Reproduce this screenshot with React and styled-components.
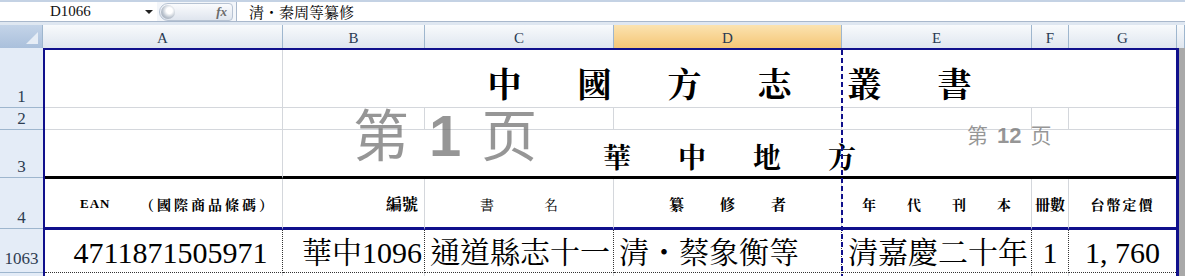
import React from 'react';
import styled, { createGlobalStyle } from 'styled-components';

const NAVY = '#10108c';
const GRID = '#d4d7dc';
const HEAD_LINE = '#9eb6ce';
const LATIN_SERIF = `"Liberation Serif", "Times New Roman", "DejaVu Serif"`;
const SERIF = `${LATIN_SERIF}, "Noto Serif CJK TC", "Noto Sans CJK TC", serif`;
const CJK = `"Noto Serif CJK TC", "Noto Sans CJK TC", serif`;

const GlobalStyle = createGlobalStyle`
  html, body {
    margin: 0;
    padding: 0;
    background: #fff;
    overflow: hidden;
  }
  body {
    font-family: ${SERIF};
    color: #000;
  }
`;

const Window = styled.div`
  width: 1185px;
  height: 276px;
  overflow: hidden;
`;

/* ---------- formula bar ---------- */
const FormulaBar = styled.div`
  height: 25px;
  box-sizing: border-box;
  display: flex;
  background: #dce6f2;
  border-top: 2px solid #c4d2e4;
  border-bottom: 3px solid #dfe7f1;
`;
const NameBox = styled.div`
  width: 157px;
  background: #fff;
  border-bottom: 1px solid #a9b8cc;
  display: flex;
  align-items: center;
  position: relative;
  font-family: ${LATIN_SERIF}, serif;
  font-size: 15px;
  color: #111;
  padding-left: 50px;
  box-sizing: border-box;
`;
const Arrow = styled.span`
  position: absolute;
  right: 4px;
  top: 8px;
  border-left: 4px solid transparent;
  border-right: 4px solid transparent;
  border-top: 4px solid #222;
`;
const FxArea = styled.div`
  width: 79px;
  display: flex;
  align-items: center;
  background: #f3f6fa;
  border-bottom: 1px solid #a9b8cc;
`;
const Pill = styled.div`
  width: 74px;
  height: 18px;
  margin-left: 2px;
  border-radius: 9px 4px 4px 9px;
  background: linear-gradient(#fafbfd, #dfe5ee);
  border: 1px solid #b7c3d3;
  box-sizing: border-box;
  display: flex;
  align-items: center;
  justify-content: space-between;
  padding: 0 5px 0 1px;
`;
const Knob = styled.span`
  width: 14px;
  height: 14px;
  border-radius: 50%;
  background: radial-gradient(circle at 60% 40%, #fff 0 25%, #b9c2cd 60%, #8f9aa8);
`;
const Fx = styled.span`
  font-family: ${LATIN_SERIF}, serif;
  font-style: italic;
  font-weight: 700;
  font-size: 13px;
  color: #6b6b6b;
`;
const FormulaInput = styled.div`
  flex: 1;
  background: #fff;
  border-left: 1px solid #a9b8cc;
  border-bottom: 1px solid #a9b8cc;
  padding-left: 12px;
  font-family: ${CJK};
  font-size: 15px;
  line-height: 19px;
`;

/* ---------- sheet frame ---------- */
const Sheet = styled.div`
  display: grid;
  grid-template-columns: 43px 1fr;
  grid-template-rows: 23px auto;
`;
const Corner = styled.div`
  background: linear-gradient(#c4d4e8, #aac0dc);
  border-right: 1px solid ${HEAD_LINE};
  position: relative;
  &::after {
    content: '';
    position: absolute;
    right: 4px;
    bottom: 4px;
    border-left: 12px solid transparent;
    border-bottom: 12px solid #e6edf6;
  }
`;
const ColHeaderBar = styled.div`
  display: flex;
`;
const ColHead = styled.div`
  flex: ${p => (p.$w ? `0 0 ${p.$w}px` : '1')};
  box-sizing: border-box;
  border-right: 1px solid ${HEAD_LINE};
  background: ${p =>
    p.$active
      ? 'linear-gradient(#fbe3b0, #f5c676)'
      : 'linear-gradient(#f8fafc, #dfe6ef)'};
  display: flex;
  align-items: center;
  justify-content: center;
  padding-top: 3px;
  font-family: ${LATIN_SERIF}, serif;
  font-size: 15px;
  color: #2a3a52;
`;
const RowHeaderBar = styled.div`
  display: flex;
  flex-direction: column;
`;
const RowHead = styled.div`
  height: ${p => p.$h}px;
  flex: none;
  box-sizing: border-box;
  background: #e4ecf7;
  border-bottom: 1px solid ${HEAD_LINE};
  display: flex;
  align-items: flex-end;
  justify-content: center;
  padding-bottom: ${p => p.$pb || 1}px;
  font-family: ${LATIN_SERIF}, serif;
  font-size: 17px;
  line-height: 18px;
  color: #2e3d52;
`;
const Body = styled.div`
  display: flex;
  align-items: flex-start;
`;
const Page = styled.div`
  position: relative;
  display: grid;
  grid-template-columns: 238px 142px 189px 228px 190px 37px 107px;
  grid-template-rows: 58px 22px 49px 51px 43px 30px;
  border-top: 2px solid ${NAVY};
  border-left: 2px solid ${NAVY};
  border-right: 3px solid ${NAVY};
`;
const Outside = styled.div`
  flex: 1;
  align-self: stretch;
  background: #a9a9a9;
`;

/* ---------- cells ---------- */
const Cell = styled.div`
  box-sizing: border-box;
  min-width: 0;
  overflow: hidden;
  grid-column: span ${p => p.$span || 1};
  border-right: ${p => (p.$last ? 'none' : `1px solid ${GRID}`)};
  border-bottom: 1px solid ${GRID};
  display: flex;
`;
const TitleCell = styled(Cell)`
  justify-content: center;
  align-items: flex-end;
  gap: ${p => p.$gap}px;
  padding-bottom: ${p => p.$pb}px;
  font-family: ${CJK};
  font-weight: 700;
  font-size: ${p => p.$size}px;
  line-height: 1;
  border-bottom: ${p => p.$rule || `1px solid ${GRID}`};
`;
const BlankCell = styled(Cell)`
  border-bottom: ${p => p.$rule || `1px solid ${GRID}`};
`;
const HeadCell = styled(Cell)`
  align-items: center;
  justify-content: ${p => p.$justify || 'center'};
  gap: ${p => p.$gap || 0}px;
  padding: 1px ${p => p.$pr || 0}px 0 ${p => p.$pl || 0}px;
  font-family: ${CJK};
  font-weight: ${p => (p.$light ? 400 : 700)};
  font-size: ${p => p.$size || 14}px;
  border-bottom: 3px solid ${NAVY};
`;
const Latin = styled.span`
  font-family: ${LATIN_SERIF}, serif;
  font-weight: 700;
  font-size: 13px;
  letter-spacing: 1px;
`;
const Spaced = styled.span`
  letter-spacing: ${p => p.$ls}px;
`;
const DataCell = styled(Cell)`
  align-items: center;
  justify-content: ${p => p.$justify || 'flex-start'};
  padding: 3px ${p => p.$pr || 0}px 0 ${p => p.$pl || 0}px;
  font-family: ${SERIF};
  font-size: 30px;
  line-height: 1;
  white-space: nowrap;
  border-right: ${p => (p.$last ? 'none' : '1px dotted #333')};
  border-bottom: 1px dotted #333;
`;

/* ---------- overlays ---------- */
const PageBreak = styled.div`
  position: absolute;
  left: 796px;
  top: 0;
  bottom: 0;
  width: 2px;
  background: repeating-linear-gradient(${NAVY} 0 5px, transparent 5px 8px);
`;
const PageLabel = styled.div`
  position: absolute;
  left: ${p => p.$x}px;
  top: ${p => p.$y}px;
  display: flex;
  align-items: baseline;
  gap: ${p => p.$gap}px;
  font-family: "Noto Sans CJK SC", sans-serif;
  font-size: ${p => p.$size}px;
  line-height: 1;
  color: rgba(110, 110, 110, 0.72);
  pointer-events: none;
`;
const PageNum = styled.span`
  font-family: "Liberation Sans", sans-serif;
  font-weight: 700;
  font-size: ${p => p.$size}px;
`;

const spread = text => text.split('').map((c, i) => <span key={i}>{c}</span>);

const colHeads = [
  { label: 'A', w: 240 },
  { label: 'B', w: 142 },
  { label: 'C', w: 189 },
  { label: 'D', w: 228, active: true },
  { label: 'E', w: 190 },
  { label: 'F', w: 37 },
  { label: 'G', w: 108 },
  { label: '' },
];

const rowHeads = [
  { label: '1', h: 60 },
  { label: '2', h: 22 },
  { label: '3', h: 48 },
  { label: '4', h: 51 },
  { label: '1063', h: 44, pb: 4 },
  { label: '', h: 30 },
];

const App = () => {
  return (
    <Window>
      <GlobalStyle />
      <FormulaBar>
        <NameBox>
          D1066
          <Arrow />
        </NameBox>
        <FxArea>
          <Pill>
            <Knob />
            <Fx>fx</Fx>
          </Pill>
        </FxArea>
        <FormulaInput>清・秦周等纂修</FormulaInput>
      </FormulaBar>

      <Sheet>
        <Corner />
        <ColHeaderBar>
          {colHeads.map((c, i) => (
            <ColHead key={i} $w={c.w} $active={c.active}>{c.label}</ColHead>
          ))}
        </ColHeaderBar>

        <RowHeaderBar>
          {rowHeads.map((r, i) => (
            <RowHead key={i} $h={r.h} $pb={r.pb}>{r.label}</RowHead>
          ))}
        </RowHeaderBar>

        <Body>
          <Page>
            {/* row 1 */}
            <BlankCell />
            <TitleCell $span={6} $last $gap={56} $size={34} $pb={7}>
              {spread('中國方志叢書')}
            </TitleCell>

            {/* row 2 */}
            <BlankCell />
            <BlankCell />
            <BlankCell />
            <BlankCell />
            <BlankCell />
            <BlankCell />
            <BlankCell $last />

            {/* row 3 */}
            <BlankCell $rule="3px solid #000" />
            <TitleCell $span={6} $last $gap={47} $size={28} $pb={6} $rule="3px solid #000">
              {spread('華中地方')}
            </TitleCell>

            {/* row 4 */}
            <HeadCell $justify="space-between" $pl={35} $pr={6}>
              <Latin>EAN</Latin>
              <Spaced $ls={3}>（國際商品條碼）</Spaced>
            </HeadCell>
            <HeadCell $justify="flex-end" $pr={6} $size={16}>編號</HeadCell>
            <HeadCell $light $gap={50}>{spread('書名')}</HeadCell>
            <HeadCell $gap={36} $size={15}>{spread('纂修者')}</HeadCell>
            <HeadCell $gap={31}>{spread('年代刊本')}</HeadCell>
            <HeadCell $size={15}>冊數</HeadCell>
            <HeadCell $last><Spaced $ls={2}>台幣定價</Spaced></HeadCell>

            {/* row 1063 */}
            <DataCell $justify="center" $pl={14}>4711871505971</DataCell>
            <DataCell $justify="flex-end" $pr={2}>華中1096</DataCell>
            <DataCell $pl={5}>通道縣志十一</DataCell>
            <DataCell $pl={5}>清・蔡象衡等</DataCell>
            <DataCell $pl={6}>清嘉慶二十年</DataCell>
            <DataCell $justify="center">1</DataCell>
            <DataCell $last $justify="center">1, 760</DataCell>

            {/* row 1064 */}
            <BlankCell />
            <BlankCell />
            <BlankCell />
            <BlankCell />
            <BlankCell />
            <BlankCell />
            <BlankCell $last />

            <PageBreak />
            <PageLabel $x={308} $y={54} $gap={20} $size={56}>
              <span>第</span>
              <PageNum $size={58}>1</PageNum>
              <span>页</span>
            </PageLabel>
            <PageLabel $x={922} $y={74} $gap={9} $size={21}>
              <span>第</span>
              <PageNum $size={22}>12</PageNum>
              <span>页</span>
            </PageLabel>
          </Page>
          <Outside />
        </Body>
      </Sheet>
    </Window>
  );
};

export default App;
